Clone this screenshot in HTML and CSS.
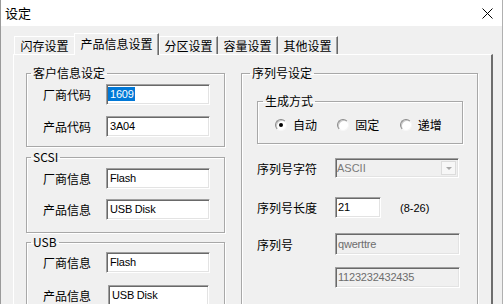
FILE: index.html
```html
<!DOCTYPE html>
<html lang="zh-CN">
<head>
<meta charset="utf-8">
<title>设定</title>
<link rel="stylesheet" href="styles.css">
</head>
<body>
<div class="window">
  <div class="titlebar">
    <span class="title">设定</span>
    <svg class="close" width="11" height="11" viewBox="0 0 11 11"><path d="M0.5 0.5 L10.5 10.5 M10.5 0.5 L0.5 10.5" stroke="#000" stroke-width="1" fill="none"/></svg>
  </div>
  <div class="client">
    <div class="tabs">
      <div class="tab t1">闪存设置</div>
      <div class="tab active">产品信息设置</div>
      <div class="tab t3">分区设置</div>
      <div class="tab t4">容量设置</div>
      <div class="tab t5">其他设置</div>
    </div>
    <div class="panel">
      <div class="col-left">
        <fieldset class="grp">
          <legend class="lg">客户信息设定</legend>
          <div class="gbody g1">
            <div class="row"><span class="lbl">厂商代码</span><div class="field"><span class="sel">1609</span></div></div>
            <div class="row"><span class="lbl">产品代码</span><div class="field">3A04</div></div>
          </div>
        </fieldset>
        <fieldset class="grp grp2">
          <legend class="lg">SCSI</legend>
          <div class="gbody g2">
            <div class="row"><span class="lbl">厂商信息</span><div class="field">Flash</div></div>
            <div class="row"><span class="lbl">产品信息</span><div class="field">USB Disk</div></div>
          </div>
        </fieldset>
        <fieldset class="grp grp3">
          <legend class="lg">USB</legend>
          <div class="gbody g3">
            <div class="row"><span class="lbl">厂商信息</span><div class="field">Flash</div></div>
            <div class="row"><span class="lbl">产品信息</span><div class="field f-usb">USB Disk</div></div>
          </div>
        </fieldset>
      </div>
      <fieldset class="grp grp-serial">
        <legend class="lg lg-serial">序列号设定</legend>
        <div class="gbody gs">
          <fieldset class="grp grp-mode">
            <legend class="lg lg-mode">生成方式</legend>
            <div class="radios">
              <div class="ritem"><span class="radio checked"></span><span>自动</span></div>
              <div class="ritem"><span class="radio"></span><span>固定</span></div>
              <div class="ritem"><span class="radio"></span><span>递增</span></div>
            </div>
          </fieldset>
          <div class="srow s1">
            <span class="slbl">序列号字符</span>
            <div class="combo"><span class="ctext">ASCII</span><span class="cbtn"><span class="arrow"></span></span></div>
          </div>
          <div class="srow s2">
            <span class="slbl">序列号长度</span>
            <div class="field rf short">21</div>
            <span class="hint">(8-26)</span>
          </div>
          <div class="srow s3">
            <span class="slbl">序列号</span>
            <div class="field rf wide dis">qwerttre</div>
          </div>
          <div class="srow s4">
            <span class="slbl"></span>
            <div class="field rf wide dis">1123232432435</div>
          </div>
        </div>
      </fieldset>
    </div>
  </div>
</div>
</body>
</html>
```
FILE: styles.css
```css
html, body {
  margin: 0;
  padding: 0;
  background: #f0f0f0;
}
body {
  font-family: "Noto Sans CJK SC", "Noto Sans", sans-serif;
  font-size: 12px;
  color: #000;
}
.window {
  box-sizing: border-box;
  width: 503px;
  height: 304px;
  overflow: hidden;
  background: #f0f0f0;
  border-left: 1px solid #9a9a9a;
  border-right: 1px solid #b0b0b0;
}
.titlebar {
  height: 26px;
  background: #fff;
  display: flex;
  align-items: center;
  justify-content: space-between;
  padding: 0 9px 0 4px;
}
.title {
  font-size: 13px;
  line-height: 16px;
}
.close {
  display: block;
}
.client {
  padding: 7px 9px 0 12px;
}
.tabs {
  display: flex;
  align-items: flex-end;
  height: 21px;
  padding-left: 1px;
}
.tab {
  box-sizing: border-box;
  height: 18px;
  border-top: 1px solid #fff;
  border-left: 1px solid #fff;
  border-right: 1px solid #696969;
  box-shadow: inset -1px 0 0 #a0a0a0;
  background: #f0f0f0;
  text-align: center;
  line-height: 16px;
  padding-top: 1px;
  white-space: nowrap;
}
.t1 { width: 60px; border-right: none; box-shadow: none; }
.t3 { width: 59px; }
.t4 { width: 60px; border-left: none; }
.t5 { width: 60px; border-left: none; }
.tab.active {
  width: 85px;
  height: 22px;
  margin-bottom: -1px;
  position: relative;
  z-index: 1;
  line-height: 18px;
  padding-top: 1px;
}
.panel {
  box-sizing: border-box;
  width: 480px;
  height: 260px;
  border-top: 1px solid #fff;
  border-left: 1px solid #fff;
  border-right: 2px solid #6d6d6d;
  padding: 10px 0 0 12px;
  display: flex;
  align-items: flex-start;
  gap: 16px;
}
.col-left {
  width: 199px;
  display: flex;
  flex-direction: column;
}
.grp {
  margin: 0;
  padding: 0;
  min-width: 0;
  border: 1px solid #a8a8a8;
  box-shadow: inset 1px 1px 0 #fff, 1px 1px 0 #fff;
}
.lg {
  padding: 0 2px;
  margin-left: 4px;
  line-height: 16px;
  font-size: 12px;
}
.grp2 { margin-top: 2px; }
.grp3 { margin-top: 1px; height: 90px; }
.gbody {
  display: flex;
  flex-direction: column;
  padding-left: 16px;
}
.g1 { padding-top: 3px; padding-bottom: 9px; gap: 11px; }
.g2 { padding-top: 3px; padding-bottom: 12px; gap: 10px; }
.g3 { padding-top: 2px; gap: 12px; }
.row {
  display: flex;
  align-items: center;
  height: 21px;
}
.lbl {
  width: 63px;
  flex: none;
}
.field {
  box-sizing: border-box;
  width: 104px;
  height: 21px;
  background: #fff;
  border: 1px solid;
  border-color: #a0a0a0 #fff #fff #a0a0a0;
  box-shadow: inset 1px 1px 0 #696969, inset -1px -1px 0 #e3e3e3;
  padding-left: 3px;
  font-family: "Liberation Sans", Arial, sans-serif;
  font-size: 11px;
  letter-spacing: -0.2px;
  line-height: 19px;
  white-space: nowrap;
  overflow: hidden;
}
.f-usb {
  margin-left: 2px;
  width: 101px;
}
.sel {
  display: inline-block;
  margin-left: -2px;
  padding: 0 1px 0 2px;
  background: #0078d7;
  color: #fff;
  line-height: 14px;
}
.grp-serial {
  width: 237px;
  box-sizing: border-box;
  height: 260px;
}
.lg-serial { margin-left: 8px; }
.gs {
  padding-top: 12px;
  padding-left: 15px;
}
.grp-mode {
  width: 206px;
  box-sizing: border-box;
}
.lg-mode { margin-left: 5px; }
.radios {
  display: flex;
  height: 14px;
  padding: 9px 0 11px 17px;
}
.ritem {
  width: 64px;
  display: flex;
  align-items: center;
  gap: 6px;
  line-height: 14px;
}
.radio {
  box-sizing: border-box;
  width: 12px;
  height: 12px;
  border-radius: 50%;
  border: 1px solid;
  border-color: #8a8a8a #f6f6f6 #f6f6f6 #8a8a8a;
  background: #fff;
  box-shadow: inset 1px 1px 0 #c8c8c8;
  display: flex;
  align-items: center;
  justify-content: center;
  flex: none;
}
.radio.checked::after {
  content: "";
  width: 4px;
  height: 4px;
  border-radius: 50%;
  background: #000;
}
.srow {
  display: flex;
  align-items: center;
}
.s1 { margin-top: 14px; height: 20px; }
.s2 { margin-top: 19px; height: 21px; }
.s3 { margin-top: 15px; height: 22px; }
.s4 { margin-top: 12px; height: 21px; }
.slbl {
  width: 78px;
  flex: none;
}
.rf {
  padding-left: 2px;
}
.short { width: 46px; }
.wide { width: 125px; }
.s3 .wide { height: 22px; line-height: 20px; }
.dis {
  background: #f0f0f0;
  color: #6d6d6d;
}
.hint {
  margin-left: 19px;
  font-family: "Liberation Sans", Arial, sans-serif;
  font-size: 11px;
}
.combo {
  box-sizing: border-box;
  width: 124px;
  height: 20px;
  border: 1px solid;
  border-color: #a0a0a0 #fff #fff #a0a0a0;
  box-shadow: inset 1px 1px 0 #696969, inset -1px -1px 0 #e3e3e3;
  background: #f0f0f0;
  display: flex;
  align-items: center;
  justify-content: space-between;
  padding: 0 2px 0 1px;
}
.ctext {
  font-family: "Liberation Sans", Arial, sans-serif;
  font-size: 11px;
  color: #7a7a7a;
}
.cbtn {
  box-sizing: border-box;
  width: 15px;
  height: 14px;
  border: 1px solid #dcdcdc;
  background: #f7f7f7;
  display: flex;
  align-items: center;
  justify-content: center;
}
.arrow {
  width: 0;
  height: 0;
  border-left: 3px solid transparent;
  border-right: 3px solid transparent;
  border-top: 3px solid #a8a8a8;
}
```
